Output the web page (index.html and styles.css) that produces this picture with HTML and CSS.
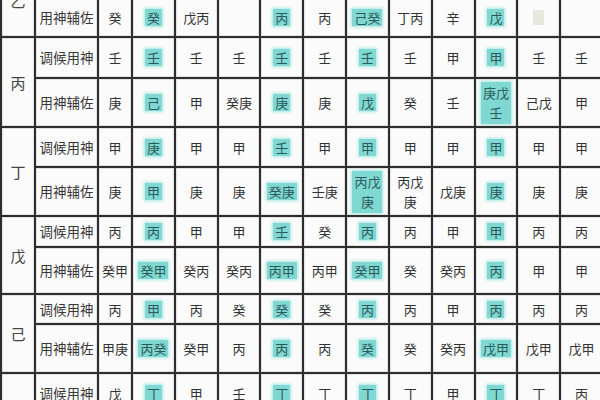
FILE: index.html
```html
<!DOCTYPE html>
<html lang="zh">
<head>
<meta charset="utf-8">
<title>调候用神表</title>
<link rel="stylesheet" href="styles.css">
</head>
<body>
<div class="frame">
<table class="grid">
  <colgroup>
    <col class="c-stem"><col class="c-label"><col class="c-first">
    <col><col><col><col><col><col><col><col><col><col><col>
  </colgroup>
  <tbody>
    <tr class="r-a1">
      <td class="stem" rowspan="2">乙</td><td class="label"></td>
      <td></td><td></td><td></td><td></td><td></td><td></td><td></td><td></td><td></td><td></td><td></td><td></td>
    </tr>
    <tr class="r-a2">
      <td class="label">用神辅佐</td>
      <td>癸</td><td><span class="hl">癸</span></td><td>戊丙</td><td></td><td><span class="hl">丙</span></td><td>丙</td><td><span class="hl">己癸</span></td><td>丁丙</td><td>辛</td><td><span class="hl">戊</span></td><td><span class="blank"></span></td><td></td>
    </tr>
    <tr class="r-b1">
      <td class="stem" rowspan="2">丙</td><td class="label">调候用神</td>
      <td>壬</td><td><span class="hl">壬</span></td><td>壬</td><td>壬</td><td><span class="hl">壬</span></td><td>壬</td><td><span class="hl">壬</span></td><td>壬</td><td>甲</td><td><span class="hl">甲</span></td><td>壬</td><td>壬</td>
    </tr>
    <tr class="r-b2">
      <td class="label">用神辅佐</td>
      <td>庚</td><td><span class="hl">己</span></td><td>甲</td><td>癸庚</td><td><span class="hl">庚</span></td><td>庚</td><td><span class="hl">戊</span></td><td>癸</td><td>壬</td><td><span class="hl two">庚戊<br>壬</span></td><td>己戊</td><td>甲</td>
    </tr>
    <tr class="r-c1">
      <td class="stem" rowspan="2">丁</td><td class="label">调候用神</td>
      <td>甲</td><td><span class="hl">庚</span></td><td>甲</td><td>甲</td><td><span class="hl">壬</span></td><td>甲</td><td><span class="hl">甲</span></td><td>甲</td><td>甲</td><td><span class="hl">甲</span></td><td>甲</td><td>甲</td>
    </tr>
    <tr class="r-c2">
      <td class="label">用神辅佐</td>
      <td>庚</td><td><span class="hl">甲</span></td><td>庚</td><td>庚</td><td><span class="hl">癸庚</span></td><td>壬庚</td><td><span class="hl two">丙戊<br>庚</span></td><td><span class="two">丙戊<br>庚</span></td><td>戊庚</td><td><span class="hl">庚</span></td><td>庚</td><td>庚</td>
    </tr>
    <tr class="r-d1">
      <td class="stem" rowspan="2">戊</td><td class="label">调候用神</td>
      <td>丙</td><td><span class="hl">丙</span></td><td>甲</td><td>甲</td><td><span class="hl">壬</span></td><td>癸</td><td><span class="hl">丙</span></td><td>丙</td><td>甲</td><td><span class="hl">甲</span></td><td>丙</td><td>丙</td>
    </tr>
    <tr class="r-d2">
      <td class="label">用神辅佐</td>
      <td>癸甲</td><td><span class="hl">癸甲</span></td><td>癸丙</td><td>癸丙</td><td><span class="hl">丙甲</span></td><td>丙甲</td><td><span class="hl">癸甲</span></td><td>癸</td><td>癸丙</td><td><span class="hl">丙</span></td><td>甲</td><td>甲</td>
    </tr>
    <tr class="r-e1">
      <td class="stem" rowspan="2">己</td><td class="label">调候用神</td>
      <td>丙</td><td><span class="hl">甲</span></td><td>丙</td><td>癸</td><td><span class="hl">癸</span></td><td>癸</td><td><span class="hl">丙</span></td><td>丙</td><td>甲</td><td><span class="hl">丙</span></td><td>丙</td><td>丙</td>
    </tr>
    <tr class="r-e2">
      <td class="label">用神辅佐</td>
      <td>甲庚</td><td><span class="hl">丙癸</span></td><td>癸甲</td><td>丙</td><td><span class="hl">丙</span></td><td>丙</td><td><span class="hl">癸</span></td><td>癸</td><td>癸丙</td><td><span class="hl">戊甲</span></td><td>戊甲</td><td>戊甲</td>
    </tr>
    <tr class="r-f1">
      <td class="stem" rowspan="2"></td><td class="label">调候用神</td>
      <td>戊</td><td><span class="hl">丁</span></td><td>甲</td><td>壬</td><td><span class="hl">丁</span></td><td>丁</td><td><span class="hl">丁</span></td><td>丁</td><td>甲</td><td><span class="hl">丁</span></td><td>丁</td><td>丙</td>
    </tr>
    <tr class="r-f2">
      <td class="label"></td>
      <td></td><td></td><td></td><td></td><td></td><td></td><td></td><td></td><td></td><td></td><td></td><td></td>
    </tr>
  </tbody>
</table>
</div>
</body>
</html>
```

FILE: styles.css
```css
html, body {
  margin: 0;
  padding: 0;
  width: 600px;
  height: 400px;
  overflow: hidden;
  background: #fafafa;
}

.frame {
  width: 600px;
  height: 400px;
  overflow: hidden;
}

.grid {
  width: 604px;
  margin-top: -38px;
  border-collapse: collapse;
  table-layout: fixed;
  font-family: "Noto Sans CJK SC", "Noto Sans CJK JP", sans-serif;
  color: #333;
  font-size: 13px;
  line-height: 15px;
}

.c-stem { width: 34px; }
.c-label { width: 63px; }
.c-first { width: 34px; }

.grid td {
  border: 2px solid #2e2e2e;
  background: #fbfbfb;
  box-shadow: inset 0 0 0 1px #e2e2e2;
  text-align: center;
  vertical-align: middle;
  padding: 0;
  white-space: nowrap;
  overflow: hidden;
}

.grid td.stem {
  font-size: 15px;
  color: #444;
}

.grid td.label {
  font-size: 13.5px;
  color: #383838;
}

.two {
  display: inline-block;
  line-height: 20px;
}

.hl {
  display: inline-block;
  background: #80d8d3;
  color: #2c5a5a;
  padding: 1px 2px;
  box-shadow: 0 0 3px 1px #a8e6e2;
}

.blank {
  display: inline-block;
  width: 11px;
  height: 15px;
  background: #e6e8df;
  vertical-align: middle;
}

.r-a1 { height: 34px; }
.r-a2 { height: 40px; }
.r-b1 { height: 41px; }
.r-b2 { height: 49px; }
.r-c1 { height: 40px; }
.r-c2 { height: 49px; }
.r-d1 { height: 31px; }
.r-d2 { height: 47px; }
.r-e1 { height: 30px; }
.r-e2 { height: 49px; }
.r-f1 { height: 40px; }
.r-f2 { height: 49px; }
```
